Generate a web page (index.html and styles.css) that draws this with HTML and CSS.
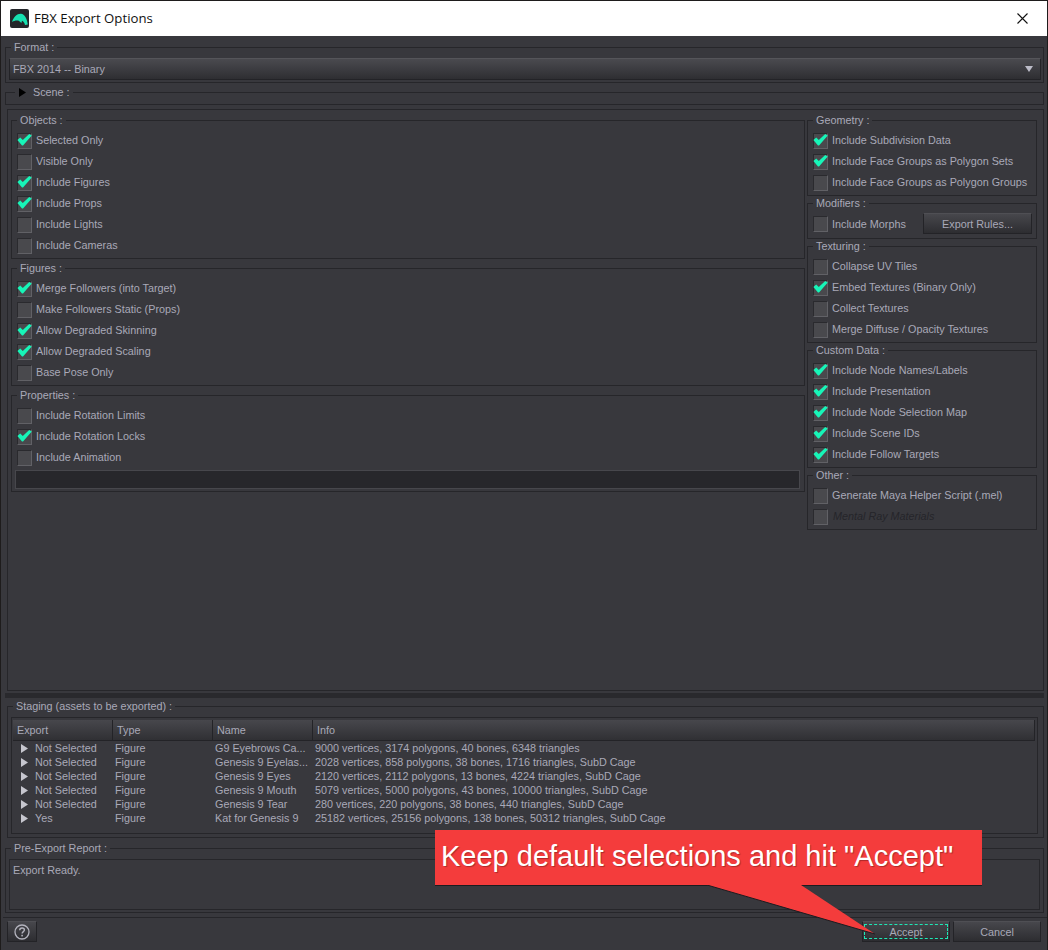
FILE: index.html
```html
<!DOCTYPE html>
<html lang="en">
<head>
  <meta charset="UTF-8" />
  <title>FBX Export Options</title>
  <link rel="stylesheet" href="styles.css">
</head>
<body>
  <svg class="defs" width="0" height="0">
    <symbol id="tick" viewBox="0 0 15 12">
      <path d="M0.4 6 L3.2 3.6 L5.8 6 L12.2 0 L14.8 1.6 L6 11.6 L5 11.6 Z" fill="#17f5b8"/>
    </symbol>
    <symbol id="tri" viewBox="0 0 7 9">
      <path d="M0 0 L7 4.5 L0 9 Z"/>
    </symbol>
  </svg>

  <div class="window">
    <div class="titlebar">
      <svg class="app-icon" width="19" height="19" viewBox="0 0 19 19">
        <rect width="19" height="19" rx="2" fill="#24262a"/>
        <path d="M2 13 C3.5 8 7.5 4.4 11 4.8 C14.6 5.2 17 9.5 17.8 15.4 L15 16 C14.4 13.6 13.4 12.4 12 11.8 L11.4 14 L8.8 11.8 C6.2 11.2 4.2 11.8 2 13 Z" fill="#17e0b0"/>
      </svg>
      <span class="title">FBX Export Options</span>
      <svg class="close" width="11" height="11" viewBox="0 0 11 11">
        <path d="M0.5 0.5 L10.5 10.5 M10.5 0.5 L0.5 10.5" stroke="#111" stroke-width="1.1" fill="none"/>
      </svg>
    </div>

    <div class="content">
      <fieldset class="group format">
        <legend>Format :</legend>
        <div class="select">
          <span>FBX 2014 -- Binary</span>
          <span class="select-arrow"></span>
        </div>
      </fieldset>

      <fieldset class="group scene">
        <legend><svg class="tri tri-black"><use href="#tri"/></svg>Scene :</legend>
      </fieldset>

      <div class="main">
        <div class="col-left">
          <fieldset class="group">
            <legend>Objects :</legend>
            <div class="opt"><span class="check"><svg class="tick"><use href="#tick"/></svg></span>Selected Only</div>
            <div class="opt"><span class="check"></span>Visible Only</div>
            <div class="opt"><span class="check"><svg class="tick"><use href="#tick"/></svg></span>Include Figures</div>
            <div class="opt"><span class="check"><svg class="tick"><use href="#tick"/></svg></span>Include Props</div>
            <div class="opt"><span class="check"></span>Include Lights</div>
            <div class="opt"><span class="check"></span>Include Cameras</div>
          </fieldset>
          <fieldset class="group">
            <legend>Figures :</legend>
            <div class="opt"><span class="check"><svg class="tick"><use href="#tick"/></svg></span>Merge Followers (into Target)</div>
            <div class="opt"><span class="check"></span>Make Followers Static (Props)</div>
            <div class="opt"><span class="check"><svg class="tick"><use href="#tick"/></svg></span>Allow Degraded Skinning</div>
            <div class="opt"><span class="check"><svg class="tick"><use href="#tick"/></svg></span>Allow Degraded Scaling</div>
            <div class="opt"><span class="check"></span>Base Pose Only</div>
          </fieldset>
          <fieldset class="group">
            <legend>Properties :</legend>
            <div class="opt"><span class="check"></span>Include Rotation Limits</div>
            <div class="opt"><span class="check"><svg class="tick"><use href="#tick"/></svg></span>Include Rotation Locks</div>
            <div class="opt"><span class="check"></span>Include Animation</div>
            <div class="dark-input"></div>
          </fieldset>
        </div>

        <div class="col-right">
          <fieldset class="group">
            <legend>Geometry :</legend>
            <div class="opt"><span class="check"><svg class="tick"><use href="#tick"/></svg></span>Include Subdivision Data</div>
            <div class="opt"><span class="check"><svg class="tick"><use href="#tick"/></svg></span>Include Face Groups as Polygon Sets</div>
            <div class="opt"><span class="check"></span>Include Face Groups as Polygon Groups</div>
          </fieldset>
          <fieldset class="group modifiers">
            <legend>Modifiers :</legend>
            <div class="opt"><span class="check"></span>Include Morphs<span class="btn rules">Export Rules...</span></div>
          </fieldset>
          <fieldset class="group">
            <legend>Texturing :</legend>
            <div class="opt"><span class="check"></span>Collapse UV Tiles</div>
            <div class="opt"><span class="check"><svg class="tick"><use href="#tick"/></svg></span>Embed Textures (Binary Only)</div>
            <div class="opt"><span class="check"></span>Collect Textures</div>
            <div class="opt"><span class="check"></span>Merge Diffuse / Opacity Textures</div>
          </fieldset>
          <fieldset class="group">
            <legend>Custom Data :</legend>
            <div class="opt"><span class="check"><svg class="tick"><use href="#tick"/></svg></span>Include Node Names/Labels</div>
            <div class="opt"><span class="check"><svg class="tick"><use href="#tick"/></svg></span>Include Presentation</div>
            <div class="opt"><span class="check"><svg class="tick"><use href="#tick"/></svg></span>Include Node Selection Map</div>
            <div class="opt"><span class="check"><svg class="tick"><use href="#tick"/></svg></span>Include Scene IDs</div>
            <div class="opt"><span class="check"><svg class="tick"><use href="#tick"/></svg></span>Include Follow Targets</div>
          </fieldset>
          <fieldset class="group">
            <legend>Other :</legend>
            <div class="opt"><span class="check"></span>Generate Maya Helper Script (.mel)</div>
            <div class="opt disabled"><span class="check"></span>Mental Ray Materials</div>
          </fieldset>
        </div>
      </div>

      <div class="splitter"></div>

      <fieldset class="group staging">
        <legend>Staging (assets to be exported) :</legend>
        <div class="table">
          <div class="thead">
            <span>Export</span><span>Type</span><span>Name</span><span>Info</span>
          </div>
          <div class="trow">
            <span class="c-export"><svg class="tri"><use href="#tri"/></svg>Not Selected</span><span>Figure</span><span>G9 Eyebrows Ca...</span><span>9000 vertices, 3174 polygons, 40 bones, 6348 triangles</span>
          </div>
          <div class="trow">
            <span class="c-export"><svg class="tri"><use href="#tri"/></svg>Not Selected</span><span>Figure</span><span>Genesis 9 Eyelas...</span><span>2028 vertices, 858 polygons, 38 bones, 1716 triangles, SubD Cage</span>
          </div>
          <div class="trow">
            <span class="c-export"><svg class="tri"><use href="#tri"/></svg>Not Selected</span><span>Figure</span><span>Genesis 9 Eyes</span><span>2120 vertices, 2112 polygons, 13 bones, 4224 triangles, SubD Cage</span>
          </div>
          <div class="trow">
            <span class="c-export"><svg class="tri"><use href="#tri"/></svg>Not Selected</span><span>Figure</span><span>Genesis 9 Mouth</span><span>5079 vertices, 5000 polygons, 43 bones, 10000 triangles, SubD Cage</span>
          </div>
          <div class="trow">
            <span class="c-export"><svg class="tri"><use href="#tri"/></svg>Not Selected</span><span>Figure</span><span>Genesis 9 Tear</span><span>280 vertices, 220 polygons, 38 bones, 440 triangles, SubD Cage</span>
          </div>
          <div class="trow">
            <span class="c-export"><svg class="tri"><use href="#tri"/></svg>Yes</span><span>Figure</span><span>Kat for Genesis 9</span><span>25182 vertices, 25156 polygons, 138 bones, 50312 triangles, SubD Cage</span>
          </div>
        </div>
      </fieldset>

      <fieldset class="group report">
        <legend>Pre-Export Report :</legend>
        <div class="report-box">Export Ready.</div>
      </fieldset>
    </div>

    <div class="footer">
      <span class="btn help">
        <svg width="16" height="16" viewBox="0 0 16 16">
          <circle cx="8" cy="8" r="7" fill="none" stroke="#b4b4be" stroke-width="1.3"/>
          <path d="M5.7 6.2 C5.8 4.7 6.8 4 8 4 C9.4 4 10.4 4.9 10.4 6 C10.4 7.6 8.1 7.6 8.1 9.6" fill="none" stroke="#b4b4be" stroke-width="1.4"/>
          <rect x="7.3" y="10.8" width="1.6" height="1.6" fill="#b4b4be"/>
        </svg>
      </span>
      <span class="btn accept"><span class="focus-ring">Accept</span></span>
      <span class="btn cancel">Cancel</span>
    </div>
  </div>

  <div class="callout">Keep default selections and hit "Accept"</div>
  <svg class="callout-tail" width="180" height="56" viewBox="0 0 180 56">
    <path d="M0 0 L168 49 L94 0 Z" fill="#f43c3c"/>
    <path d="M0 0 L168 49" stroke="#1c1c20" stroke-width="1" fill="none"/>
  </svg>
</body>
</html>
```

FILE: styles.css
```css
html {
  background-color: #1e1c1c;
}

body {
  margin: 0;
  width: 1048px;
  height: 950px;
  overflow: hidden;
  position: relative;
  font-family: "Liberation Sans", Arial, sans-serif;
  font-size: 10.8px;
  line-height: 14px;
  color: #a9a9b8;
}

.defs {
  position: absolute;
}

.window {
  margin: 1px 1px 0 1px;
  height: 949px;
  background-color: #38383d;
}

.titlebar {
  height: 35px;
  background-color: #fff;
  display: flex;
  align-items: center;
  padding: 0 19px 0 9px;
  color: #111;
}

.app-icon {
  margin-right: 5px;
}

.title {
  font-family: "Open Sans", "Noto Sans", sans-serif;
  font-size: 13.2px;
  margin-bottom: 2px;
}

.close {
  margin-left: auto;
}

.content {
  padding: 4px 3px 0 4px;
}

.group {
  box-sizing: border-box;
  margin: 0;
  padding: 0 2px 2px 2px;
  min-width: 0;
  border: 1px solid #26262a;
}

.group legend {
  margin-left: 3px;
  padding: 0 3px;
  height: 14px;
}

.format {
  height: 43px;
}

.select {
  margin-top: 4px;
  margin-left: 1px;
  height: 22px;
  box-sizing: border-box;
  display: flex;
  align-items: center;
  justify-content: space-between;
  padding: 0 7px 1px 3px;
  border: 1px solid #232327;
  border-top-color: #55555a;
  background: linear-gradient(#4a4a4f, #2e2e32);
}

.select-arrow {
  width: 0;
  height: 0;
  border-left: 4px solid transparent;
  border-right: 4px solid transparent;
  border-top: 6px solid #bcbcc8;
}

.scene {
  margin-top: 2px;
  height: 20px;
}

.scene legend {
  margin-left: 7px;
  padding-left: 4px;
}

.tri {
  width: 7px;
  height: 9px;
  fill: #c6c6ce;
  margin-right: 7px;
  vertical-align: -1px;
}

.tri-black {
  fill: #000;
}

.main {
  margin: 4px 0 0 2px;
  height: 582px;
  box-sizing: border-box;
  border: 1px solid #26262a;
  padding: 3px 5px 0 3px;
  display: flex;
  gap: 2px;
}

.col-left {
  width: 794px;
  display: flex;
  flex-direction: column;
  gap: 2px;
}

.col-right {
  width: 230px;
  display: flex;
  flex-direction: column;
}

.col-left .group,
.col-right .group {
  padding-top: 3px;
}

.opt {
  box-sizing: border-box;
  height: 21px;
  display: flex;
  align-items: center;
  padding: 0 0 2px 3px;
}

.check {
  position: relative;
  flex: none;
  width: 15px;
  height: 16px;
  margin: 2px 4px 0 0;
  box-sizing: border-box;
  background-color: #49494d;
  border: 1px solid #2a2a2e;
  border-right-color: #616166;
  border-bottom-color: #616166;
}

.tick {
  position: absolute;
  left: -1px;
  top: 0;
  width: 15px;
  height: 12px;
}

.disabled {
  color: #25252a;
  font-style: italic;
}

.disabled .check {
  margin-right: 5px;
}

.dark-input {
  margin: 2px 2px 0 1px;
  height: 19px;
  box-sizing: border-box;
  background-color: #27272b;
  border: 1px solid #47474c;
}

.btn {
  box-sizing: border-box;
  display: flex;
  align-items: center;
  justify-content: center;
  height: 21px;
  border: 1px solid #232327;
  border-top-color: #4f4f54;
  background: linear-gradient(#47474c, #2d2d31);
}

.rules {
  margin-left: auto;
  margin-right: 2px;
  width: 109px;
}

.modifiers {
  height: 43px;
}

.modifiers .opt {
  padding-bottom: 0;
}

.modifiers .check {
  margin-top: 0;
}

.splitter {
  margin-top: 2px;
  height: 5px;
  background-color: #29292d;
}

.staging {
  margin: 1px 0 0 2px;
  height: 139px;
  padding: 0 5px 0 4px;
}

.staging legend {
  margin-left: 1px;
}

.table {
  margin-top: 4px;
  margin-left: -1px;
  height: 117px;
  box-sizing: border-box;
  border: 1px solid #26262a;
  padding: 2px 0 0 1px;
}

.thead {
  height: 21px;
  display: grid;
  grid-template-columns: 100px 100px 100px 722px;
}

.thead span {
  box-sizing: border-box;
  padding-left: 4px;
  display: flex;
  align-items: center;
  border-right: 1px solid #232327;
  border-bottom: 1px solid #232327;
  background: linear-gradient(#47474c, #303034);
}

.trow {
  height: 14px;
  display: grid;
  grid-template-columns: 100px 100px 100px 722px;
}

.trow span {
  padding-left: 2px;
  white-space: nowrap;
}

.trow .c-export {
  padding-left: 8px;
}

.report {
  margin-top: 3px;
  height: 72px;
}

.report-box {
  margin: 4px 1px 0 1px;
  height: 51px;
  box-sizing: border-box;
  border: 1px solid #26262a;
  padding: 3px;
}

.footer {
  margin: 4px 0 0 2px;
  border-top: 1px solid #26262a;
  padding: 3px 6px 0 4px;
  display: flex;
  gap: 3px;
}

.help {
  width: 30px;
  margin-right: auto;
}

.accept,
.cancel {
  width: 88px;
}

.focus-ring {
  box-sizing: border-box;
  width: 84px;
  height: 15px;
  display: flex;
  align-items: center;
  justify-content: center;
  border: 1px dashed #1de9b6;
}

.callout {
  position: absolute;
  left: 435px;
  top: 830px;
  width: 547px;
  height: 55px;
  box-sizing: border-box;
  padding: 10px 0 0 6px;
  background-color: #f43c3c;
  box-shadow: 0 1px 0 #1c1c20;
  color: #fff;
  font-size: 29px;
  line-height: 32px;
  text-shadow: 1px 1px 1px rgba(0,0,0,0.3);
  white-space: nowrap;
}

.callout-tail {
  position: absolute;
  left: 707px;
  top: 885px;
}
```
